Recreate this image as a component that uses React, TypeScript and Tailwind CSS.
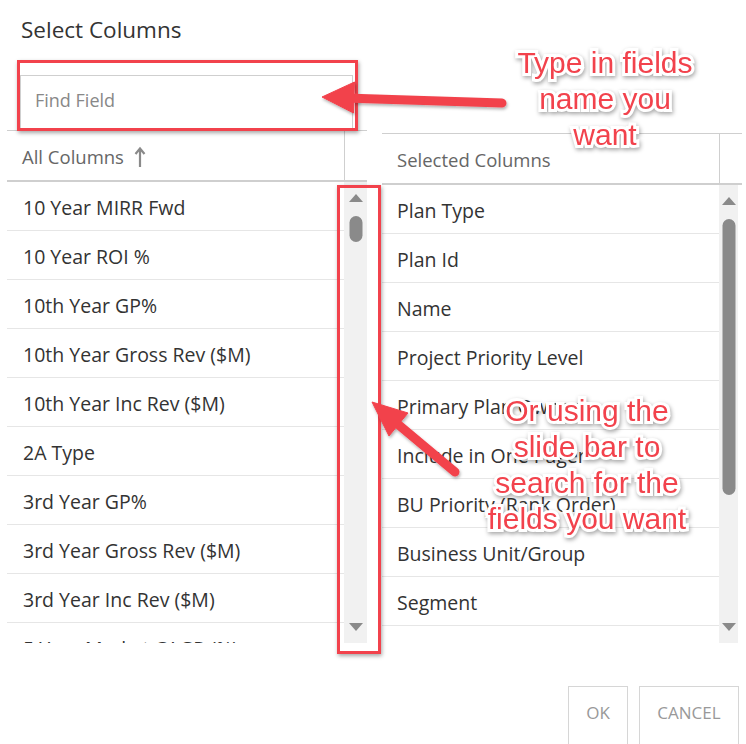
import React from 'react';

const allColumns = [
  '10 Year MIRR Fwd',
  '10 Year ROI %',
  '10th Year GP%',
  '10th Year Gross Rev ($M)',
  '10th Year Inc Rev ($M)',
  '2A Type',
  '3rd Year GP%',
  '3rd Year Gross Rev ($M)',
  '3rd Year Inc Rev ($M)',
  '5 Year Market CAGR (%)',
];

const selectedColumns = [
  'Plan Type',
  'Plan Id',
  'Name',
  'Project Priority Level',
  'Primary Plan Owner',
  'Include in One Pager',
  'BU Priority (Rank Order)',
  'Business Unit/Group',
  'Segment',
  'Sub Segment',
];

const font = "font-['Open_Sans',_'Noto_Sans',_sans-serif]";
const noteText =
  "font-['Liberation_Sans',_Arial,_sans-serif] text-[30px] leading-[36px] text-[#f2424c] text-center [-webkit-text-stroke:6px_#fff] [paint-order:stroke_fill] drop-shadow-[1px_2px_2px_rgba(0,0,0,0.35)]";

const Triangle = ({ up }: { up?: boolean }) => (
  <svg width="14" height="8" viewBox="0 0 14 8">
    <polygon points={up ? '7,0 14,8 0,8' : '0,0 14,0 7,8'} fill="#8a8a8a" />
  </svg>
);

const ScrollBar = ({ thumbTop, thumbHeight, width }: { thumbTop: number; thumbHeight: number; width: string }) => (
  <div className={`${width} h-full bg-[#f1f1f1] relative flex flex-col items-center justify-between py-[12px]`}>
    <Triangle up />
    <div
      className="absolute w-[13px] rounded-full bg-[#8a8a8a] left-1/2 -translate-x-1/2"
      style={{ top: thumbTop, height: thumbHeight }}
    />
    <Triangle />
  </div>
);

export default function App() {
  return (
    <div className={`relative w-[746px] h-[744px] bg-white overflow-hidden text-[#333] ${font}`}>
      <div className="pt-[15px] pl-[21px] text-[22.5px] leading-[30px] text-[#333]">Select Columns</div>

      <div className="flex mt-[30px]">
        {/* left column */}
        <div className="ml-[7px] w-[360px] flex flex-col">
          <div className="pl-[13px] pr-[14px]">
            <div className="h-[55px] border border-b-0 border-[#cfcfcf] flex items-center pl-[14px] pb-[6px] text-[18px] text-[#888]">
              Find Field
            </div>
          </div>
          <div className="h-[52px] border-t border-b-2 border-[#cfcfcf] flex">
            <div className="w-[337px] flex items-center pl-[15px] pt-[2px] text-[18.5px] text-[#666] gap-[10px]">
              <span>All Columns</span>
              <svg width="12" height="22" viewBox="0 0 12 22">
                <path d="M6 21V3M1.5 8L6 2.5L10.5 8" stroke="#8a8a8a" strokeWidth="2.2" fill="none" />
              </svg>
            </div>
            <div className="flex-1 border-l border-[#cfcfcf]" />
          </div>
          <div className="h-[461px] flex overflow-hidden">
            <div className="w-[337px] flex flex-col">
              {allColumns.map((c) => (
                <div
                  key={c}
                  className="h-[49px] shrink-0 border-b border-[#e6e6e6] flex items-center pl-[16px] pt-[3px] text-[19.5px] whitespace-nowrap"
                >
                  {c}
                </div>
              ))}
            </div>
            <ScrollBar width="w-[23px]" thumbTop={34} thumbHeight={26} />
          </div>
        </div>

        {/* right column */}
        <div className="ml-[15px] flex-1 flex flex-col pt-[58px]">
          <div className="h-[52px] border-t border-b-2 border-[#cfcfcf] flex mr-[4px]">
            <div className="w-[337px] flex items-center pl-[15px] pt-[2px] text-[18.5px] text-[#666]">Selected Columns</div>
            <div className="flex-1 border-l border-[#cfcfcf]" />
          </div>
          <div className="h-[458px] flex overflow-hidden">
            <div className="w-[337px] flex flex-col">
              {selectedColumns.map((c) => (
                <div
                  key={c}
                  className="h-[49px] shrink-0 border-b border-[#e6e6e6] flex items-center pl-[15px] pt-[3px] text-[19.5px] whitespace-nowrap"
                >
                  {c}
                </div>
              ))}
            </div>
            <ScrollBar width="w-[19px]" thumbTop={34} thumbHeight={276} />
          </div>
        </div>
      </div>

      <div className="flex justify-end gap-[11px] pr-[7px] mt-[43px]">
        <button className="w-[60px] h-[60px] border border-[#d6d6d6] text-[17px] text-[#999] flex items-start justify-center pt-[13px]">
          OK
        </button>
        <button className="w-[100px] h-[60px] border border-[#d6d6d6] text-[17px] text-[#999] flex items-start justify-center pt-[13px]">
          CANCEL
        </button>
      </div>

      {/* annotation overlays */}
      <div className="absolute left-[17px] top-[60px] w-[341px] h-[71px] border-[3px] border-[#f2424c] shadow-[1px_2px_4px_rgba(0,0,0,0.35)]" />
      <div className="absolute left-[337px] top-[185px] w-[44px] h-[469px] border-[3px] border-[#f2424c] shadow-[1px_2px_4px_rgba(0,0,0,0.35)]" />

      <svg className="absolute left-0 top-0 pointer-events-none" width="746" height="744">
        <g fill="#f2424c" stroke="#f2424c" filter="url(#sh)">
          <line x1="345" y1="98" x2="502" y2="103" strokeWidth="9" strokeLinecap="round" />
          <polygon points="322,97 354.5,82 353.5,113" strokeWidth="1" />
          <line x1="394" y1="421" x2="455" y2="472" strokeWidth="9" strokeLinecap="round" />
          <polygon points="372,402 389,436 408,413" strokeWidth="1" />
        </g>
        <defs>
          <filter id="sh" x="-20%" y="-20%" width="140%" height="140%">
            <feDropShadow dx="1" dy="2" stdDeviation="1.5" floodColor="#000" floodOpacity="0.3" />
          </filter>
        </defs>
      </svg>

      <div className={`absolute left-[480px] top-[45px] w-[250px] ${noteText}`}>
        Type in fields
        <br />
        name you
        <br />
        want
      </div>
      <div className={`absolute left-[462px] top-[393px] w-[250px] ${noteText}`}>
        Or using the
        <br />
        slide bar to
        <br />
        search for the
        <br />
        fields you want
      </div>
    </div>
  );
}
